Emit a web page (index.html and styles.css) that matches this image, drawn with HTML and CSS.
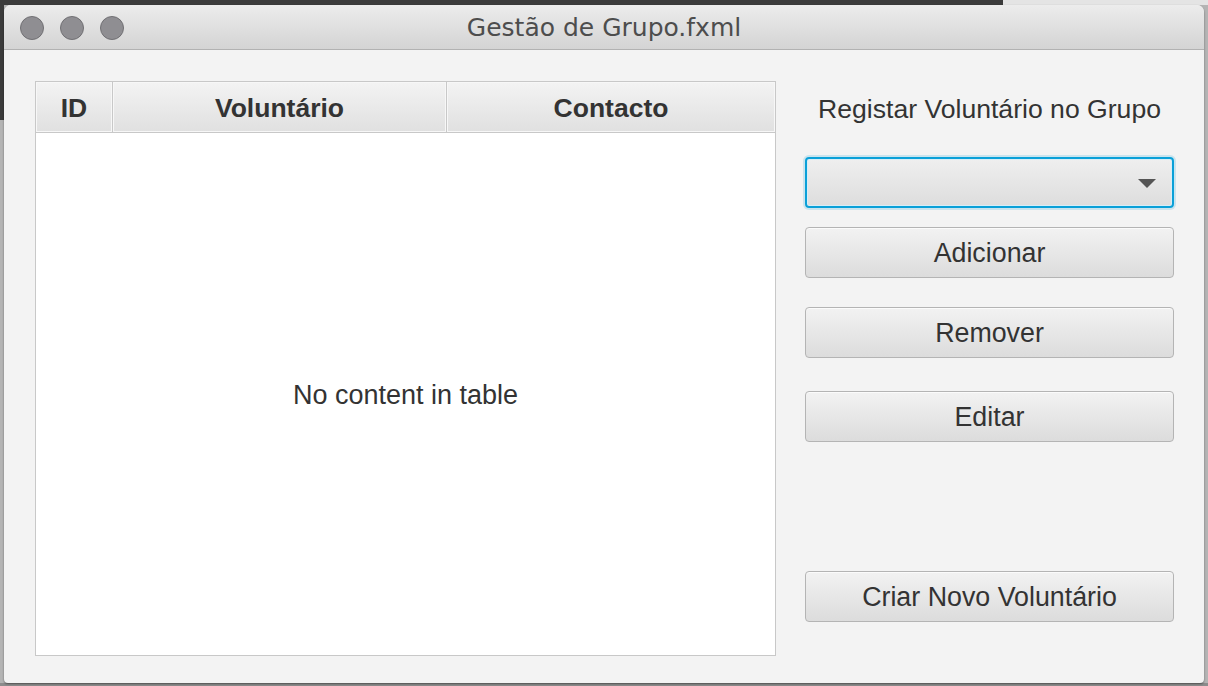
FILE: index.html
```html
<!DOCTYPE html>
<html lang="pt">
<head>
<meta charset="utf-8">
<title>Gestão de Grupo.fxml</title>
<link rel="stylesheet" href="styles.css">
</head>
<body>
<div class="window">
  <div class="titlebar">
    <div class="lights">
      <span class="light"></span>
      <span class="light"></span>
      <span class="light"></span>
    </div>
    <div class="title">Gestão de Grupo.fxml</div>
  </div>
  <div class="content">
    <div class="table">
      <div class="thead">
        <div class="th">ID</div>
        <div class="th">Voluntário</div>
        <div class="th">Contacto</div>
      </div>
      <div class="tbody">No content in table</div>
    </div>
    <div class="side">
      <div class="heading">Registar Voluntário no Grupo</div>
      <div class="combo"><span class="arrow"></span></div>
      <button class="btn btn-add">Adicionar</button>
      <button class="btn btn-remove">Remover</button>
      <button class="btn btn-edit">Editar</button>
      <button class="btn btn-create">Criar Novo Voluntário</button>
    </div>
  </div>
</div>
</body>
</html>
```
FILE: styles.css
```css
html, body {
  margin: 0;
  padding: 0;
  height: 686px;
  overflow: hidden;
}
body {
  background:
    linear-gradient(to right, #3b3b3b 1003px, #e4e4e4 1003px) left top / 100% 5px no-repeat,
    linear-gradient(#3b3b3b, #3b3b3b) left top / 4px 120px no-repeat,
    linear-gradient(#8c8c8c, #8c8c8c) left bottom / 100% 3px no-repeat,
    #b4b4b4;
  font-family: "Liberation Sans", Arial, sans-serif;
  color: #333;
}
.window {
  margin: 5px 0 0 4px;
  width: 1200px;
  height: 678px;
  border-radius: 7px 7px 4px 4px;
  overflow: hidden;
  background: #f3f3f3;
  display: flex;
  flex-direction: column;
  box-shadow: 0 1px 2px rgba(0,0,0,0.45);
}
.titlebar {
  height: 44px;
  flex: none;
  background: linear-gradient(#ececec, #d4d4d4);
  border-bottom: 1px solid #b2b2b2;
  position: relative;
  display: flex;
  align-items: center;
  justify-content: center;
}
.lights {
  position: absolute;
  left: 16px;
  top: 11px;
  display: flex;
  gap: 16px;
}
.light {
  width: 22px;
  height: 22px;
  border-radius: 50%;
  background: #8f8e92;
  border: 1px solid #717074;
}
.title {
  font-family: "DejaVu Sans", sans-serif;
  font-size: 25px;
  color: #4d4d4d;
  padding-top: 1px;
}
.content {
  flex: 1;
  display: flex;
  padding: 31px 30px 27px 31px;
  gap: 29px;
}
.table {
  width: 739px;
  height: 573px;
  border: 1px solid #c8c8c8;
  background: #fff;
  display: flex;
  flex-direction: column;
}
.thead {
  display: grid;
  grid-template-columns: 77px 334px 1fr;
  height: 50px;
  border-bottom: 1px solid #c8c8c8;
  flex: none;
}
.th {
  background: linear-gradient(#f3f3f3, #e0e0e0);
  box-shadow: inset 0 0 0 1px #f7f7f7;
  border-right: 1px solid #c8c8c8;
  display: flex;
  align-items: center;
  justify-content: center;
  font-weight: bold;
  font-size: 26.5px;
  color: #333;
  padding-top: 3px;
}
.th:last-child {
  border-right: none;
}
.tbody {
  flex: 1;
  display: flex;
  align-items: center;
  justify-content: center;
  font-size: 27px;
  color: #333;
  padding-top: 2px;
}
.side {
  width: 369px;
  display: flex;
  flex-direction: column;
}
.heading {
  height: 56px;
  display: flex;
  align-items: center;
  justify-content: center;
  font-size: 26.6px;
  color: #333;
}
.combo {
  margin-top: 20px;
  height: 51px;
  box-sizing: border-box;
  border: 2px solid #0aa0d8;
  border-radius: 4px;
  background: linear-gradient(#efefef, #dddddd);
  box-shadow: 0 0 0 2px rgba(10,160,216,0.18), inset 0 0 0 1px #d6eef8;
  position: relative;
}
.arrow {
  position: absolute;
  right: 16px;
  top: 20px;
  width: 0;
  height: 0;
  border-left: 9px solid transparent;
  border-right: 9px solid transparent;
  border-top: 9px solid #555;
}
.btn {
  height: 51px;
  width: 369px;
  box-sizing: border-box;
  border: 1px solid #b4b4b4;
  border-radius: 4px;
  background: linear-gradient(#f2f2f2, #dcdcdc);
  box-shadow: inset 0 1px 0 #fbfbfb;
  font-family: "Liberation Sans", Arial, sans-serif;
  font-size: 26.8px;
  color: #333;
  padding: 2px 0 0;
}
.btn-add { margin-top: 19px; }
.btn-remove { margin-top: 29px; }
.btn-edit { margin-top: 33px; }
.btn-create { margin-top: 129px; }
```
